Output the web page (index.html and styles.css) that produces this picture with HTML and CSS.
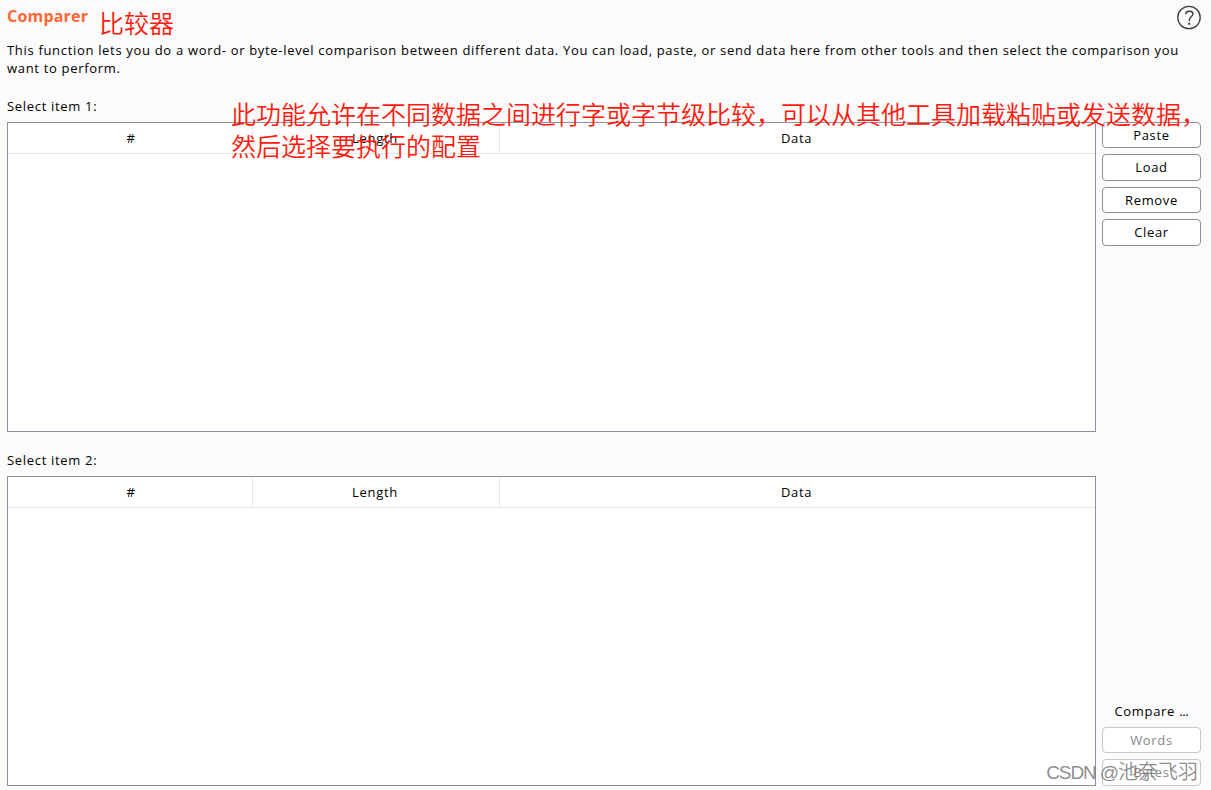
FILE: index.html
```
<!DOCTYPE html>
<html lang="zh">

<head>
    <meta charset="UTF-8">
    <title>Comparer</title>
    <link rel="stylesheet" href="styles.css">
</head>

<body>
    <header class="header">
        <h1>Comparer</h1>
        <svg class="help" width="24" height="25" viewBox="0 0 24 25" fill="none" stroke="#3c3c3c">
            <circle cx="12" cy="12.5" r="11.2" stroke-width="1.3" />
            <path d="M8.9 9.2V8.8C8.9 7.1 10.2 6.3 12.2 6.3s3.7 1 3.7 2.7c0 2.6-3.5 2.8-3.5 5.6v1.4" stroke-width="1.4" />
            <path d="M12.2 17.6v2.2" stroke-width="2" />
        </svg>
    </header>
    <p class="intro">This function lets you do a word- or byte-level comparison between different data. You can load, paste, or send data here from other tools and then select the comparison you<br>want to perform.</p>

    <div class="label">Select item 1:</div>
    <div class="row">
        <div class="table">
            <div class="thead">
                <div class="th">#</div>
                <div class="th">Length</div>
                <div class="th">Data</div>
            </div>
        </div>
        <div class="side">
            <button>Paste</button>
            <button class="tall">Load</button>
            <button>Remove</button>
            <button class="tall">Clear</button>
        </div>
    </div>

    <div class="label second">Select item 2:</div>
    <div class="row">
        <div class="table">
            <div class="thead">
                <div class="th">#</div>
                <div class="th">Length</div>
                <div class="th">Data</div>
            </div>
        </div>
        <div class="side bottom">
            <div class="compare">Compare <span>...</span></div>
            <button disabled>Words</button>
            <button class="tall" disabled>Bytes</button>
        </div>
    </div>

    <div class="note note-title">比较器</div>
    <div class="note note-text">此功能允许在不同数据之间进行字或字节级比较，可以从其他工具加载粘贴或发送数据，<br>然后选择要执行的配置</div>
    <div class="watermark"><span>CSDN @</span>池奈飞羽</div>
</body>

</html>
```
FILE: styles.css
```
* {
    padding: 0;
    margin: 0;
    box-sizing: border-box;
}

body {
    position: relative;
    height: 790px;
    padding: 5px 10px 0 7px;
    overflow: hidden;
    background: #fbfbfb;
    color: #000;
    font-family: 'Open Sans', 'Noto Sans', 'Noto Sans CJK SC', sans-serif;
    font-size: 13px;
    letter-spacing: 0.68px;
    line-height: 18px;
}

.header {
    display: flex;
    justify-content: space-between;
    height: 36px;
}

h1 {
    color: #ff6633;
    font-size: 16px;
    font-weight: bold;
    letter-spacing: 0.2px;
    line-height: 22px;
}

.intro {
    height: 56px;
    white-space: nowrap;
}

.label {
    height: 25px;
}

.second {
    margin-top: 19px;
}

.row {
    display: flex;
    gap: 6px;
    height: 310px;
}

.table {
    width: 1089px;
    border: 1px solid #8f8f9f;
    background: #fff;
}

.thead {
    display: grid;
    grid-template-columns: 244px 247px 1fr;
    height: 31px;
    border-bottom: 1px solid #e6e6e6;
    line-height: 30px;
    text-align: center;
}

.th:first-child {
    padding-left: 2px;
}

.th + .th {
    padding-right: 2px;
    border-left: 1px solid #e6e6e6;
}

.side {
    display: flex;
    flex-direction: column;
    gap: 6px;
    width: 99px;
}

.bottom {
    justify-content: flex-end;
}

button {
    height: 26px;
    border: 1px solid #8f8f9f;
    border-radius: 4px;
    background: #fff;
    color: #000;
    font: inherit;
    letter-spacing: inherit;
    line-height: 24px;
}

button.tall {
    height: 27px;
    padding-bottom: 1px;
}

button:disabled {
    border-color: #c8c8c8;
    color: #888;
}

.compare {
    height: 19px;
    text-align: center;
}

.compare span {
    letter-spacing: -0.3px;
}

.note {
    position: absolute;
    color: #ff1a0d;
    font-family: 'Noto Sans CJK SC', sans-serif;
    font-size: 25px;
    font-weight: 350;
    letter-spacing: 0;
    line-height: 32px;
    white-space: nowrap;
}

.note-title {
    left: 99px;
    top: 6px;
}

.note-text {
    left: 231px;
    top: 97px;
}

.watermark {
    position: absolute;
    right: 13px;
    top: 759px;
    color: rgba(110, 110, 110, 0.8);
    font-family: 'Liberation Sans', 'Noto Sans CJK SC', sans-serif;
    font-size: 20px;
    font-weight: 350;
    letter-spacing: 0;
    line-height: 26px;
}

.watermark span {
    font-size: 19px;
    letter-spacing: -1.1px;
}
```
